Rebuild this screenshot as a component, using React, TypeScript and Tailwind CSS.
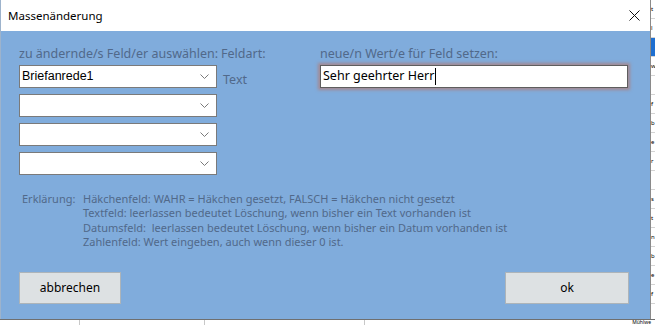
import React from "react";

const fields = ["Briefanrede1", "", "", ""];

const notes = [
  "Häkchenfeld: WAHR = Häkchen gesetzt, FALSCH = Häkchen nicht gesetzt",
  "Textfeld: leerlassen bedeutet Löschung, wenn bisher ein Text vorhanden ist",
  "Datumsfeld:  leerlassen bedeutet Löschung, wenn bisher ein Datum vorhanden ist",
  "Zahlenfeld: Wert eingeben, auch wenn dieser 0 ist.",
];

const Chevron = () => (
  <svg width="9" height="6" viewBox="0 0 9 6" className="shrink-0">
    <polyline points="0.5,0.5 4.5,4.5 8.5,0.5" fill="none" stroke="#7a7a7a" strokeWidth="1" />
  </svg>
);

const Combo = ({ value }: { value: string }) => (
  <div className="flex h-[23px] w-[198px] items-center justify-between border border-[#7a7a7a] bg-white pl-[2px] pr-[7px] font-['Liberation_Sans',sans-serif] text-[12.5px] text-black">
    <span>{value}</span>
    <Chevron />
  </div>
);

export default function App() {
  return (
    <div
      className="flex h-[325px] w-[655px] flex-col overflow-hidden bg-white"
      style={{ fontFamily: '"Noto Sans", "Open Sans", sans-serif' }}
    >
      <div className="flex h-[319px]">
        {/* dialog */}
        <div className="flex w-[650px] shrink-0 flex-col border-l border-[#9db3cc]">
          <div className="flex h-[31px] items-center justify-between bg-white pl-[7px] pr-[10px]">
            <span className="text-[11.5px] text-black">Massenänderung</span>
            <svg width="11" height="11" viewBox="0 0 11 11">
              <path d="M0.5 0.5 L10.5 10.5 M10.5 0.5 L0.5 10.5" stroke="#111" strokeWidth="1" />
            </svg>
          </div>
          <div className="flex flex-1 flex-col bg-[#80acdc] pl-[18px] pt-[16px] text-[#51698a]">
            <div className="flex">
              <div className="flex w-[202px] flex-col gap-[6px]">
                <div className="h-[12px] text-[12.5px] leading-[14px]">zu ändernde/s Feld/er auswählen:</div>
                {fields.map((f, i) => (
                  <Combo key={i} value={f} />
                ))}
              </div>
              <div className="flex w-[99px] flex-col">
                <div className="text-[12.5px] leading-[14px]">Feldart:</div>
                <div className="mt-[11px] pl-[2px] text-[12.5px] leading-[16px]">Text</div>
              </div>
              <div className="flex flex-col gap-[4px]">
                <div className="text-[12.5px] leading-[14px]">neue/n Wert/e für Feld setzen:</div>
                <div className="flex h-[23px] w-[308px] items-center border border-[#5e5e5e] bg-white pl-[2px] text-[12.5px] text-black shadow-[0_0_3px_2px_rgba(176,126,120,0.75)]">
                  Sehr geehrter Herr
                  <span className="ml-[1px] h-[17px] w-[1px] bg-black" />
                </div>
              </div>
            </div>

            <div className="mt-[17px] flex text-[11px] leading-[14.4px]">
              <div className="w-[64px] pl-[3px]">Erklärung:</div>
              <div className="flex flex-col">
                {notes.map((n) => (
                  <div key={n} className="whitespace-pre">{n}</div>
                ))}
              </div>
            </div>

            <div className="mt-[22px] flex pr-[21px]">
              <button className="h-[32px] w-[102px] border border-[#adb4b9] bg-[#dde1e3] text-[12px] text-black">
                abbrechen
              </button>
              <button className="ml-auto h-[32px] w-[124px] border border-[#adb4b9] bg-[#dde1e3] text-[12px] text-black">
                ok
              </button>
            </div>
          </div>
        </div>
        {/* spreadsheet sliver */}
        <div className="flex flex-1 flex-col border-l border-[#8a8a8a] text-[6px] leading-[19px] text-black">
          {["t", "l", "", "w", "", "f", "b", "e", "r", "", "s", "t", "n", "b", "e", "f"].map((c, i) => (
            <div
              key={i}
              className={i === 2 ? "h-[19px] border-b border-[#d4d4d4] bg-[#1f6fd0]" : "h-[19px] border-b border-[#d4d4d4]"}
            >
              {c}
            </div>
          ))}
        </div>
      </div>
      {/* sheet rows below */}
      <div className="flex flex-1 border-t border-[#6f6f6f]">
        <div className="w-[80px] border-r border-[#c8c8c8]" />
        <div className="w-[125px] border-r border-[#c8c8c8]" />
        <div className="w-[160px] border-r border-[#c8c8c8]" />
        <div className="flex flex-1 items-start justify-end pr-[4px] text-[5px] leading-[5px] text-black">Mühlwe</div>
      </div>
    </div>
  );
}
